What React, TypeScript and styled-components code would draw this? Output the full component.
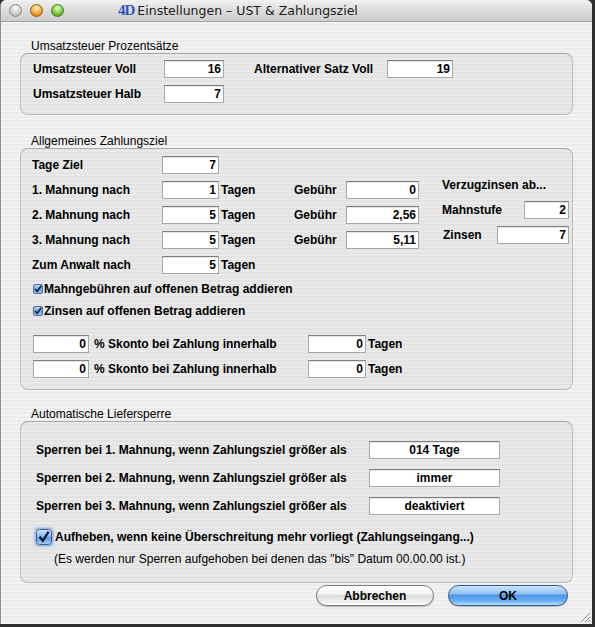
import React from "react";
import styled, { createGlobalStyle } from "styled-components";

const GlobalStyle = createGlobalStyle`
  html, body {
    margin: 0;
    padding: 0;
    background: #2f2f2f;
  }
  body {
    font-family: "Liberation Sans", Arial, Helvetica, sans-serif;
    font-size: 12px;
    color: #000;
  }
`;

function App() {
  return (
    <>
      <GlobalStyle />
      <Window>
        <TitleBar>
          <Lights>
            <Light $tone="gray" />
            <Light $tone="orange" />
            <Light $tone="green" />
          </Lights>
          <Title>
            <Logo>4D</Logo>
            <span>Einstellungen – UST &amp; Zahlungsziel</span>
          </Title>
        </TitleBar>

        <Body>
          <GroupTitle $mt={17}>Umsatzsteuer Prozentsätze</GroupTitle>
          <GroupBox $pad="6px 0 11px 12px">
            <Row>
              <Label $w={131}>Umsatzsteuer Voll</Label>
              <Field $w={60}>16</Field>
              <Label $w={133} $ml={30}>Alternativer Satz Voll</Label>
              <Field $w={66}>19</Field>
            </Row>
            <Row $mt={7}>
              <Label $w={131}>Umsatzsteuer Halb</Label>
              <Field $w={60}>7</Field>
            </Row>
          </GroupBox>

          <GroupTitle $mt={19}>Allgemeines Zahlungsziel</GroupTitle>
          <GroupBox $pad="7px 0 11px 11px">
            <TopArea>
              <Stack>
                <Row>
                  <Label $w={130}>Tage Ziel</Label>
                  <Field $w={57}>7</Field>
                </Row>
                {[
                  ["1. Mahnung nach", "1", "0"],
                  ["2. Mahnung nach", "5", "2,56"],
                  ["3. Mahnung nach", "5", "5,11"],
                ].map(([label, days, fee]) => (
                  <Row key={label} $mt={7}>
                    <Label $w={130}>{label}</Label>
                    <Field $w={57}>{days}</Field>
                    <Unit $w={75}>Tagen</Unit>
                    <Label $w={52}>Gebühr</Label>
                    <Field $w={73}>{fee}</Field>
                  </Row>
                ))}
                <Row $mt={7}>
                  <Label $w={130}>Zum Anwalt nach</Label>
                  <Field $w={57}>5</Field>
                  <Unit $w={75}>Tagen</Unit>
                </Row>
              </Stack>

              <SideStack>
                <Row>
                  <Label>Verzugzinsen ab...</Label>
                </Row>
                <SpreadRow $mt={7}>
                  <Label>Mahnstufe</Label>
                  <Field $w={45}>2</Field>
                </SpreadRow>
                <SpreadRow $mt={7}>
                  <Label $ml={1}>Zinsen</Label>
                  <Field $w={72}>7</Field>
                </SpreadRow>
              </SideStack>
            </TopArea>

            <Row $mt={6}>
              <SmallCheck />
              <Label>Mahngebühren auf offenen Betrag addieren</Label>
            </Row>
            <Row $mt={4}>
              <SmallCheck />
              <Label>Zinsen auf offenen Betrag addieren</Label>
            </Row>

            {[15, 7].map((mt, i) => (
              <Row key={i} $mt={mt}>
                <Field $w={56} $ml={1}>0</Field>
                <Label $w={214} $ml={5}>% Skonto bei Zahlung innerhalb</Label>
                <Field $w={58}>0</Field>
                <Unit>Tagen</Unit>
              </Row>
            ))}
          </GroupBox>

          <GroupTitle $mt={17}>Automatische Liefersperre</GroupTitle>
          <GroupBox $pad="19px 0 14px 15px">
            {[
              ["1", "014 Tage"],
              ["2", "immer"],
              ["3", "deaktiviert"],
            ].map(([n, value], i) => (
              <Row key={n} $mt={i === 0 ? 0 : 10}>
                <Label $w={333}>
                  Sperren bei {n}. Mahnung, wenn Zahlungsziel größer als
                </Label>
                <Field $w={131} $align="center">
                  {value}
                </Field>
              </Row>
            ))}
            <Row $mt={13}>
              <AquaCheck />
              <Label>
                Aufheben, wenn keine Überschreitung mehr vorliegt
                (Zahlungseingang...)
              </Label>
            </Row>
            <Note>
              (Es werden nur Sperren aufgehoben bei denen das "bis" Datum
              00.00.00 ist.)
            </Note>
          </GroupBox>

          <ButtonRow>
            <PushButton $w={118}>Abbrechen</PushButton>
            <PushButton $w={120} $primary>
              OK
            </PushButton>
          </ButtonRow>
        </Body>

        <Grip>
          <svg width="13" height="13" viewBox="0 0 13 13">
            <path
              d="M12 3 L3 12 M12 7 L7 12 M12 10 L10 12"
              stroke="#8a8a8a"
              strokeWidth="1"
            />
            <path
              d="M12 4 L4 12 M12 8 L8 12"
              stroke="#ffffff"
              strokeWidth="1"
            />
          </svg>
        </Grip>
      </Window>
    </>
  );
}

function SmallCheck() {
  return (
    <SmallCheckBox>
      <svg width="10" height="10" viewBox="0 0 10 10">
        <defs>
          <linearGradient id="sc" x1="0" y1="0" x2="0" y2="1">
            <stop offset="0" stopColor="#c9def6" />
            <stop offset="0.5" stopColor="#6fa3e2" />
            <stop offset="1" stopColor="#9cc6f4" />
          </linearGradient>
        </defs>
        <rect x="0.5" y="0.5" width="9" height="9" rx="1.5" fill="url(#sc)" stroke="#4f6f9a" />
        <path d="M2.2 5 L4.2 7.4 L8.3 1.6" fill="none" stroke="#10203a" strokeWidth="1.6" />
      </svg>
    </SmallCheckBox>
  );
}

function AquaCheck() {
  return (
    <AquaCheckBox>
      <svg width="16" height="16" viewBox="0 0 16 16">
        <defs>
          <linearGradient id="ac" x1="0" y1="0" x2="0" y2="1">
            <stop offset="0" stopColor="#d6e7fb" />
            <stop offset="0.5" stopColor="#7eb0ea" />
            <stop offset="0.55" stopColor="#5f98e0" />
            <stop offset="1" stopColor="#a9d2fb" />
          </linearGradient>
        </defs>
        <rect x="0.5" y="0.5" width="15" height="15" rx="3" fill="url(#ac)" stroke="#3e649b" />
        <path d="M3.6 7.8 L6.8 11.8 L12.6 2.6" fill="none" stroke="#0c1a33" strokeWidth="2.2" />
      </svg>
    </AquaCheckBox>
  );
}

const Window = styled.div`
  position: relative;
  width: 592px;
  height: 624px;
  box-sizing: border-box;
  border-left: 1px solid #8d8d8d;
  border-radius: 6px 6px 0 0;
  overflow: hidden;
  display: flex;
  flex-direction: column;
  background: repeating-linear-gradient(
    to bottom,
    #ececec 0px,
    #ececec 2px,
    #f2f2f2 2px,
    #f2f2f2 4px
  );
`;

const TitleBar = styled.div`
  height: 22px;
  flex: none;
  box-sizing: border-box;
  display: flex;
  align-items: center;
  padding-left: 8px;
  border-bottom: 1px solid #a3a3a3;
  background: linear-gradient(to bottom, #f1f1f1 0%, #dedede 45%, #cdcdcd 100%);
`;

const Lights = styled.div`
  display: flex;
  gap: 8px;
`;

const tones: Record<string, [string, string, string, string]> = {
  gray: ["#ffffff", "#d4d4d4", "#a9a9a9", "#8c8c8c"],
  orange: ["#fff2c8", "#f5b546", "#c46a08", "#9a5a14"],
  green: ["#e6ffc4", "#8fd24d", "#3b8c10", "#3f7d1a"],
};

const Light = styled.div<{ $tone: string }>`
  width: 13px;
  height: 13px;
  box-sizing: border-box;
  border-radius: 50%;
  border: 1px solid ${(p) => tones[p.$tone][3]};
  background: radial-gradient(
    circle at 50% 30%,
    ${(p) => tones[p.$tone][0]} 0%,
    ${(p) => tones[p.$tone][1]} 45%,
    ${(p) => tones[p.$tone][2]} 100%
  );
`;

const Title = styled.div`
  margin-left: 54px;
  display: flex;
  align-items: center;
  gap: 3px;
  font-family: "DejaVu Sans", "Liberation Sans", sans-serif;
  font-size: 12.5px;
  color: #1c1c1c;
  white-space: nowrap;
`;

const Logo = styled.span`
  font-family: "Liberation Serif", serif;
  font-weight: bold;
  font-size: 15px;
  color: #2c58b8;
  letter-spacing: -1px;
`;

const Body = styled.div`
  flex: 1;
  display: flex;
  flex-direction: column;
  padding: 0 19px;
`;

const GroupTitle = styled.div<{ $mt: number }>`
  margin-top: ${(p) => p.$mt}px;
  height: 14px;
  line-height: 14px;
  padding-left: 11px;
  white-space: nowrap;
`;

const GroupBox = styled.div<{ $pad: string }>`
  border: 1px solid #bdbdbd;
  border-top-color: #a9a9a9;
  border-radius: 8px;
  background: rgba(0, 0, 0, 0.035);
  padding: ${(p) => p.$pad};
  display: flex;
  flex-direction: column;
`;

const Row = styled.div<{ $mt?: number }>`
  display: flex;
  align-items: center;
  height: 18px;
  line-height: 18px;
  margin-top: ${(p) => p.$mt ?? 0}px;
  white-space: nowrap;
`;

const SpreadRow = styled(Row)`
  justify-content: space-between;
`;

const TopArea = styled.div`
  display: flex;
  align-items: flex-start;
`;

const Stack = styled.div`
  display: flex;
  flex-direction: column;
`;

const SideStack = styled.div`
  display: flex;
  flex-direction: column;
  width: 127px;
  margin-left: 23px;
  margin-top: 20px;
`;

const Label = styled.span<{ $w?: number; $ml?: number }>`
  font-weight: bold;
  width: ${(p) => (p.$w ? `${p.$w}px` : "auto")};
  margin-left: ${(p) => p.$ml ?? 0}px;
  flex: none;
`;

const Unit = styled.span<{ $w?: number }>`
  font-weight: bold;
  width: ${(p) => (p.$w ? `${p.$w}px` : "auto")};
  box-sizing: border-box;
  padding-left: 2px;
  flex: none;
`;

const Field = styled.div<{ $w: number; $ml?: number; $align?: string }>`
  width: ${(p) => p.$w}px;
  height: 18px;
  margin-left: ${(p) => p.$ml ?? 0}px;
  flex: none;
  box-sizing: border-box;
  background: #fff;
  border: 1px solid #a8a8a8;
  border-top-color: #808080;
  box-shadow: inset 0 1px 0 #e4e4e4;
  padding: 0 2px;
  line-height: 16px;
  font-weight: bold;
  text-align: ${(p) => p.$align ?? "right"};
`;

const SmallCheckBox = styled.span`
  display: flex;
  width: 10px;
  height: 10px;
  margin: 0 1px 0 1px;
  flex: none;
`;

const AquaCheckBox = styled.span`
  display: flex;
  width: 16px;
  height: 16px;
  margin-right: 3px;
  border-radius: 3px;
  box-shadow: 0 0 3px 1px rgba(70, 130, 215, 0.75);
  flex: none;
`;

const Note = styled.div`
  margin-top: 4px;
  height: 18px;
  line-height: 18px;
  padding-left: 18px;
  white-space: nowrap;
`;

const ButtonRow = styled.div`
  display: flex;
  justify-content: flex-end;
  gap: 14px;
  margin-top: 2px;
  padding-right: 5px;
`;

const PushButton = styled.div<{ $w: number; $primary?: boolean }>`
  width: ${(p) => p.$w}px;
  height: 21px;
  box-sizing: border-box;
  border-radius: 11px;
  display: flex;
  align-items: center;
  justify-content: center;
  font-weight: bold;
  border: 1px solid ${(p) => (p.$primary ? "#2f5a96" : "#7b7b7b")};
  box-shadow: 0 1px 1px rgba(0, 0, 0, 0.25);
  background: ${(p) =>
    p.$primary
      ? "linear-gradient(to bottom, #cfe6fc 0%, #8fc0f3 40%, #4d95e6 50%, #6fb2f5 80%, #b6e0ff 100%)"
      : "linear-gradient(to bottom, #ffffff 0%, #f4f4f4 40%, #dedede 50%, #ececec 80%, #ffffff 100%)"};
`;

const Grip = styled.div`
  position: absolute;
  right: 1px;
  bottom: 1px;
  width: 13px;
  height: 13px;
  display: flex;
`;

export default App;
